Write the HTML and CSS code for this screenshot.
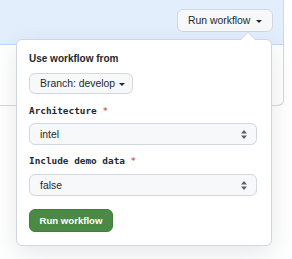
FILE: index.html
```html
<!DOCTYPE html>
<html>
<head>
<meta charset="utf-8">
<link rel="stylesheet" href="styles.css">
</head>
<body>
<div class="box">
  <div class="box-header">
    <button class="btn btn-header">Run workflow <span class="caret"></span></button>
  </div>
  <div class="box-body"></div>
</div>
<div class="menu">
  <div class="menu-title">Use workflow from</div>
  <button class="btn btn-branch">Branch: develop <span class="caret"></span></button>
  <div class="label">Architecture <span class="req">*</span></div>
  <div class="select">
    <span>intel</span>
    <svg class="updown" width="6" height="9" viewBox="0 0 6 9"><path d="M3 0L6 3.6H0Z M0 5.4H6L3 9Z" fill="#57606a"/></svg>
  </div>
  <div class="label label-2">Include demo data <span class="req">*</span></div>
  <div class="select select-2">
    <span>false</span>
    <svg class="updown" width="6" height="9" viewBox="0 0 6 9"><path d="M3 0L6 3.6H0Z M0 5.4H6L3 9Z" fill="#57606a"/></svg>
  </div>
  <button class="btn btn-primary">Run workflow</button>
</div>
</body>
</html>
```
FILE: styles.css
```css
html, body {
  margin: 0;
  padding: 0;
  background: #ffffff;
}
body {
  font-family: "Liberation Sans", Arial, sans-serif;
  color: #24292f;
  position: relative;
  width: 292px;
  height: 259px;
  overflow: hidden;
}
.box {
  width: 284px;
  border-right: 1px solid #d0d7de;
  border-bottom: 1px solid #d0d7de;
  border-bottom-right-radius: 6px;
  box-sizing: border-box;
}
.box-header {
  height: 45px;
  box-sizing: border-box;
  background: #e2eefc;
  border-bottom: 1px solid #bcd6f5;
  display: flex;
  justify-content: flex-end;
  align-items: flex-start;
  padding: 9px 10px 0 0;
}
.box-body {
  height: 60px;
}
.btn {
  font-family: "Liberation Sans", Arial, sans-serif;
  font-size: 10.4px;
  color: #24292f;
  background: #f6f8fa;
  border: 1px solid #d2d7dd;
  border-radius: 6px;
  box-sizing: border-box;
  display: flex;
  align-items: center;
  padding: 0;
  margin: 0;
  white-space: nowrap;
}
.btn-header {
  width: 96px;
  height: 23px;
  padding-left: 10px;
  gap: 6px;
}
.caret {
  display: inline-block;
  width: 0;
  height: 0;
  border-top: 3.5px solid #24292f;
  border-left: 3.5px solid transparent;
  border-right: 3.5px solid transparent;
  margin-top: 1px;
}
.menu {
  position: absolute;
  left: 16px;
  top: 39px;
  width: 256px;
  height: 207px;
  box-sizing: border-box;
  background: #ffffff;
  border: 1px solid #d0d7de;
  border-radius: 6px;
  box-shadow: 0 8px 24px rgba(140, 149, 159, 0.22);
  padding: 11px 14px 12px 12px;
  display: flex;
  flex-direction: column;
  align-items: flex-start;
}
.menu::before,
.menu::after {
  content: "";
  position: absolute;
  width: 0;
  height: 0;
  border-style: solid;
  border-color: transparent;
}
.menu::before {
  top: -16px;
  right: 15px;
  border-width: 8px;
  border-bottom-color: #d0d7de;
}
.menu::after {
  top: -14px;
  right: 16px;
  border-width: 7px;
  border-bottom-color: #ffffff;
}
.menu-title {
  font-size: 10px;
  font-weight: 700;
  line-height: 16px;
  color: #24292f;
}
.btn-branch {
  margin-top: 6px;
  width: 104px;
  height: 21px;
  padding-left: 10px;
  gap: 4px;
}
.label {
  font-family: "DejaVu Sans Mono", "Liberation Mono", monospace;
  font-size: 9.4px;
  font-weight: 700;
  line-height: 16px;
  margin-top: 9px;
  color: #24292f;
}
.label-2 {
  margin-top: 8px;
}
.req {
  color: #cf222e;
  font-weight: 400;
}
.select {
  margin-top: 4px;
  width: 228px;
  height: 22px;
  box-sizing: border-box;
  background: #f6f8fa;
  border: 1px solid #d2d7dd;
  border-radius: 6px;
  display: flex;
  align-items: center;
  justify-content: space-between;
  padding: 0 9px 0 10px;
  font-size: 10.4px;
  color: #24292f;
}
.select-2 {
  margin-top: 5px;
}
.btn-primary {
  margin-top: 13px;
  width: 84px;
  height: 23px;
  background: #4b8a45;
  border-color: #3f7d3a;
  color: #ffffff;
  font-weight: 700;
  font-size: 9.6px;
  justify-content: center;
}
```
